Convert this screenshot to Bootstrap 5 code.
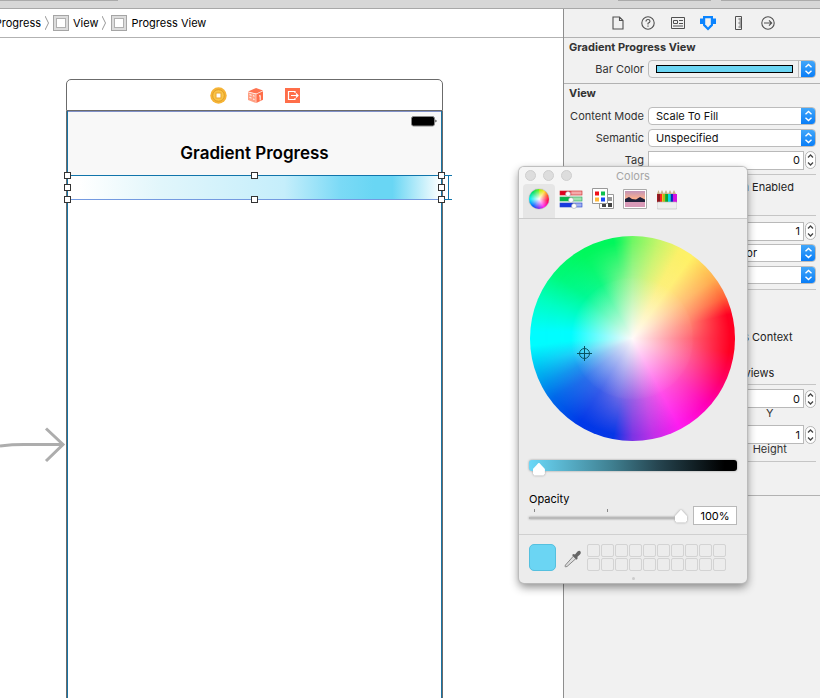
<!DOCTYPE html>
<html lang="en">
<head>
<meta charset="utf-8">
<meta name="viewport" content="width=device-width, initial-scale=1">
<title>Gradient Progress View</title>
<link href="https://cdn.jsdelivr.net/npm/bootstrap@5.3.0/dist/css/bootstrap.min.css" rel="stylesheet">
<style>
body{font:11px/14px Inter,"Liberation Sans",sans-serif;color:#222;background:#fff}
svg{display:block;flex:none}
.toolbar-strip{height:9px;background:#d7d7d7;border-bottom:1px solid #a8a8a8}
.strip-tab{height:1px;background:#aaa}
.tab-long{width:118px}.tab-mid{width:93px}.tab-end{width:99px;margin-left:10px}
.jumpbar{height:29px;border-bottom:1px solid #b2b2b2;color:#000}
.jump-first{width:41px;white-space:nowrap}
.view-glyph{width:16px;height:16px;border:1px solid #a5a5a5;background:#dcdcdc;padding:2px}
.view-glyph::after{content:"";display:block;height:10px;border:1px solid #b0b0b0;background:#fff}
.editor{min-width:0}
.canvas{padding-top:41px;overflow:hidden}
.entry-arrow{margin-top:346px}
.scene{width:377px}
.scene-dock{height:32px;border:1px solid #6b6b6b;border-radius:5px 5px 0 0;gap:20px;padding-left:2px}
.device{border:solid #6b6b6b;border-width:0 1px;}
.device-screen{border:solid #1873a3;border-width:0 1px}
.status-nav{height:64px;background:#f8f8f8;border-top:1px solid #8090c8}
.nav-title{font-size:17px;line-height:20px;font-weight:600;color:#000}
.bar-view{position:relative;height:25px;border-top:1px solid #1175ab;border-bottom:1px solid #749ae0;background:linear-gradient(90deg,#fff 3%,#e1f6fb 25%,#c5eefb 58%,#7bdaf6 73%,#69d6f4 82%,#69d6f4 87%,#fff 100%)}
.grip{position:absolute;width:7px;height:7px;border:1px solid #333;background:#fff;margin:-4px 0 0 -4px}
.g-l{left:0}.g-c{left:50%}.g-r{left:100%;margin-left:-3px}.g-t{top:0}.g-m{top:50%}.g-b{top:100%;margin-top:-3px}
.constraint{position:absolute;left:100%;top:-1px;margin-left:3px}
.inspector{width:257px;border-left:1px solid #8e8e8e;background:#f1f1f1}
.inspector-tabs{height:29px;border-bottom:1px solid #b2b2b2;gap:14px;padding-left:2px}
.bare{border:0;padding:0;background:none}
.sect{border-bottom:1px solid #b2b2b2;padding:2px 4px 0 5px}
.sect h2{font-size:11px;line-height:14px;font-weight:700;color:#333;margin:0}
.prop{display:grid;grid-template-columns:75px minmax(0,1fr);column-gap:4px;align-items:center;height:22px}
.prop>label,.prop>.cap{text-align:right;color:#333;white-space:nowrap}
.prop-color{margin:4px 0 3px}
.block-mode{padding:5px 0 3px}
.pop{height:18px;border:1px solid #bcbcbc;border-radius:4px;background:#fff;overflow:hidden}
.pop select{appearance:none;border:0;background:transparent;color:#111;padding:0 0 0 7px;min-width:0;line-height:16px;outline:0}
.pop select.with-chip{padding-left:47px}
.pop-cap{width:15px;margin:-1px -1px -1px 0;background:linear-gradient(#45a9fa,#067bf7)}
.well{background:#f1f1f1}
.well-swatch{height:8px;margin:4px 5px 0 7px;border:1px solid #000;background:#6bd5f3;padding:0}
.well-gap{width:3px;border-left:1px solid #bbb}
.num{width:1px;height:19px;min-width:0;border:1px solid #b9b9b9;border-radius:0;background:#fff;text-align:right;padding:0 3px;color:#111;outline:0}
.stepper{flex:none;width:11px;height:18px;border:1px solid #b5b5b5;border-radius:6px;background:#fff;padding:0;margin-left:1px}
.rule{border-top:1px solid #c5c5c5}
.tick{display:flex;align-items:center;gap:6px;height:18px;margin-left:79px}
.tick input{width:12px;height:12px;margin:0}
.block-ui{height:41px;padding-top:3px}
.block-draw{padding:4px 0 3px}
.block-checks{padding:2px 0}
.block-geo{padding:4px 0 0 79px;height:77px}
.geo{display:grid;grid-template-columns:minmax(0,1fr) minmax(0,1fr);column-gap:5px;row-gap:7px}
.geo small{display:block;font-size:11px;line-height:10px;text-align:center;padding-right:11px;color:#333}
.sect-end{height:34px}
.colors{position:absolute;left:519px;top:167px;width:228px;background:#ececec;border-radius:5px;box-shadow:0 0 1px 1px #bbb,0 4px 10px #0007}
.colors-head{background:#f5f5f5;border-bottom:1px solid #ccc;border-radius:5px 5px 0 0;height:52px}
.titlebar{display:grid;grid-template-columns:1fr auto 1fr;height:17px;align-items:center;color:#a5a5a5;padding:0 6px}
.titlebar h1{font-size:11px;line-height:14px;font-weight:400;margin:0}
.lights{gap:7px}
.light{width:11px;height:11px;border-radius:50%;background:#ddd;border:1px solid #cfcfcf;padding:0}
.mode{width:32px;height:34px;border-radius:4px 4px 0 0;display:grid;place-items:center;padding-bottom:4px}
.mode.on{background:#e6e6e6}
.wheel-thumb,.wheel{border-radius:50%;position:relative}
.wheel-thumb{width:20px;height:20px;background:radial-gradient(#fff,#fff0 65%),conic-gradient(#a0f000,#ffe030 35deg,#ff5030 70deg,#ff0050 100deg,#ff20f0 150deg,#7030f0 185deg,#0060ff 220deg,#00f0f0 270deg,#00e060 320deg,#60f020);box-shadow:0 0 1px #555}
.wheel{width:205px;height:205px;margin:17px 0 0 1px;overflow:hidden;background:conic-gradient(#6ff764,#c5f56a 15deg,#fbf168 28deg,#fff166 36deg,#ffad4f 54deg,#ff6038 66deg,#ff0022 76deg,#ff0022 98deg,#ff0066 115deg,#ff00b8 132deg,#ff1cf0 152deg,#c030e8 168deg,#7c34e4 180deg,#0637e6 191deg,#0038e8 212deg,#0068ea 233deg,#00b4f0 250deg,#00fdff 266deg,#00fdff 274deg,#00ffc0 293deg,#00fa78 310deg,#00f85c 330deg,#00f75c 349deg,#20f75f 353deg,#6ff764)}
.wheel::before,.wheel::after{content:"";position:absolute;inset:0;border-radius:50%}
.wheel::before{background:conic-gradient(#a6f492,#d8f37e 15deg,#fbf07a 27deg,#ffee7c 36deg,#ffc27c 54deg,#ff8070 76deg,#ff5f70 90deg,#ff5a98 110deg,#ff50c0 130deg,#ff52ea 152deg,#c85ce6 168deg,#9860e4 180deg,#6a68e6 194deg,#3a5ee8 212deg,#2a70ea 230deg,#2096ee 243deg,#20d0f8 256deg,#00fdff 268deg,#00fdff 276deg,#00fdc4 295deg,#00f996 312deg,#10f884 330deg,#50f688 342deg,#a6f492);-webkit-mask:radial-gradient(closest-side,#000 58%,#0000 95%);mask:radial-gradient(closest-side,#000 58%,#0000 95%)}
.wheel::after{background:radial-gradient(closest-side,#fffafa,#fffafa00 60%)}
.target{position:absolute;left:47px;top:110px;z-index:1}
.colors-body{padding:0 10px}
.range{appearance:none;background:transparent;display:block;margin:0;height:16px}
.range::-webkit-slider-runnable-track{height:12px}
.range::-webkit-slider-thumb{appearance:none;width:12px;height:13px;background:#fff;clip-path:polygon(50% 0,100% 50%,100% 85%,88% 100%,12% 100%,0 85%,0 50%)}
.bright{margin-top:16px;height:16px;filter:drop-shadow(0 0 1px #999)}
.bright::-webkit-slider-runnable-track{background:linear-gradient(90deg,#6bd8f8,#3f7f90 40%,#264550 62%,#000 94%);border-radius:3px;height:11px}
.bright::-webkit-slider-thumb{margin-top:3px}
.op-label{margin-top:19px;color:#000}
.op-slider{filter:drop-shadow(0 0 1px #999);height:14px;width:158px;margin-top:-3px}
.op-slider::-webkit-slider-runnable-track{height:13px;background:linear-gradient(#b9b9b9,#b9b9b9) 0 7px/100% 2px no-repeat}
.ticks{height:3px;margin-top:3px;padding:0 79px 0 5px}
.ticks i{width:1px;background:#888}
.pct{width:44px;height:19px;border:1px solid #b9b9b9;background:#fff;text-align:center;padding:0;color:#000}
.tray{border-top:1px solid #d0d0d0;margin-top:9px;padding:9px 10px 0;height:49px}
.current{width:27px;height:27px;border:1px solid #55c0df;border-radius:5px;background:#6bd5f3;padding:0}
.swatches{display:grid;grid-template-columns:repeat(10,13px);gap:1px;margin-left:5px}
.swatches i{height:13px;border:1px solid #d3d3d3;border-radius:2px}
.drag-dot{position:absolute;left:50%;bottom:3px;width:3px;height:3px;margin-left:-1px;border-radius:50%;background:#ccc}
</style>
<script src="https://cdn.jsdelivr.net/npm/bootstrap@5.3.0/dist/js/bootstrap.bundle.min.js"></script>
</head>
<body>
<svg width="0" height="0" class="position-absolute" aria-hidden="true">
<symbol id="updown" viewBox="0 0 15 18"><path d="M4.500 7.300 7.500 4.500l3 2.800M4.500 10.700l3 2.800 3-2.800" fill="none" stroke="#fff" stroke-width="1.400"/></symbol>
<symbol id="step" viewBox="0 0 9 16"><path d="M2 5.500 4.500 3 7 5.500M2 10.500 4.500 13 7 10.500" fill="none" stroke="#444" stroke-width="1.300"/></symbol>
</svg>
<div class="min-vh-100 d-flex flex-column overflow-hidden position-relative">
<header class="toolbar-strip d-flex"><span class="strip-tab tab-long me-auto"></span><span class="strip-tab tab-mid"></span><span class="strip-tab tab-end"></span></header>
<div class="d-flex flex-grow-1">
<main class="editor flex-grow-1 d-flex flex-column">
<nav class="jumpbar d-flex align-items-center" aria-label="Jump bar">
<span class="jump-first d-flex justify-content-end overflow-hidden">Gradient&nbsp;Progress</span>
<svg class="ms-1 me-1" width="4" height="14" viewBox="0 0 4 14"><path d="M0 0 3.500 7 0 14" fill="none" stroke="#999"/></svg>
<span class="view-glyph"></span><span class="ms-1">View</span>
<svg class="ms-1 me-1" width="5" height="14" viewBox="0 0 5 14"><path d="M0 0 3.500 7 0 14" fill="none" stroke="#999"/></svg>
<span class="view-glyph"></span><span class="ms-1">Progress View</span>
</nav>
<section class="canvas flex-grow-1 d-flex">
<svg class="entry-arrow" width="66" height="40" viewBox="0 0 66 40"><path d="M0 21 Q12 19.500 24 19.500H63M46 3.500 63 19.500 46 36" fill="none" stroke="#adadad" stroke-width="3"/></svg>
<div class="scene d-flex flex-column flex-shrink-0">
<div class="scene-dock d-flex justify-content-center align-items-center">
<svg width="17" height="17" viewBox="0 0 17 17"><circle cx="8.500" cy="8.500" r="8.200" fill="#f6b436"/><circle cx="8.500" cy="8.500" r="5.800" fill="#fbc648" stroke="#e09f2a"/><rect x="6" y="6" width="5" height="5" fill="#fff" stroke="#e8a52e"/></svg>
<svg width="17" height="17" viewBox="0 0 17 17"><path d="M1 4.500 9 1l7 2.500-6.500 3z" fill="#ff7350"/><path d="M1 5.200 8.800 7.200V16L1 13z" fill="#ffa084"/><path d="M9.300 7.200 16 4.300v8.500L9.300 16z" fill="#ff6e49"/><path d="M2.500 7.700l2 .5M2.500 10.500l2 .5M6 8.700l1.500.4M6 12l1.500.4M12 9.200l1.200-.8v5" fill="none" stroke="#fff"/></svg>
<svg width="17" height="17" viewBox="0 0 17 17"><rect x="1" y="1" width="15" height="15" fill="#ff6e49"/><path d="M11 6V4.500H4.500v8H11V11M7 8.500h7M12 6.500l2 2-2 2" fill="none" stroke="#fff" stroke-width="1.200"/></svg>
</div>
<div class="device flex-grow-1 d-flex">
<div class="device-screen flex-grow-1">
<div class="status-nav d-flex flex-column">
<svg class="ms-auto me-1 mt-1" width="26" height="11" viewBox="0 0 26 11"><rect x=".5" y=".5" width="23" height="9.500" rx="2" fill="#000" stroke="#888"/><path d="M24.500 3.500q2 1.500 0 3z"/></svg>
<div class="nav-title text-center mt-3">Gradient Progress</div>
</div>
<div class="bar-view">
<i class="grip g-l g-t"></i><i class="grip g-l g-m"></i><i class="grip g-l g-b"></i><i class="grip g-c g-t"></i><i class="grip g-c g-b"></i><i class="grip g-r g-t"></i><i class="grip g-r g-m"></i><i class="grip g-r g-b"></i>
<svg class="constraint" width="8" height="25" viewBox="0 0 8 25"><path d="M0 .5h8M0 24.500h8M4.500 0v25" stroke="#1175ab"/></svg>
</div>
</div></div></div>
</section>
</main>
<aside class="inspector flex-shrink-0">
<div class="inspector-tabs d-flex justify-content-center align-items-center">
<button class="bare" aria-label="File"><svg width="16" height="16" viewBox="0 0 16 16" fill="none" stroke="#505050" stroke-width="1.100"><path d="M3 2h6.500L13 5.500V14H3zM9.500 2v3.500H13"/></svg></button>
<button class="bare" aria-label="Quick help"><svg width="16" height="16" viewBox="0 0 16 16" fill="none" stroke="#505050" stroke-width="1.100"><circle cx="8" cy="8" r="6.200"/><path d="M6 6.500Q6 4.500 8 4.500t2 1.800Q10 7.500 8 8.300V9.500M8 10.500v1.300"/></svg></button>
<button class="bare" aria-label="Identity"><svg width="16" height="16" viewBox="0 0 16 16" fill="none" stroke="#505050"><path d="M1.500 2.500h13v11h-13zM3.500 5.500h4v3h-4zM9 5.500h4M9 8.500h4M3 11h10"/></svg></button>
<button class="bare" aria-label="Attributes"><svg width="16" height="16" viewBox="0 0 16 16"><path d="M3 1h10v2.500h3V9h-3v1.500L8 15.500l-5-5V9H0V3.500h3z" fill="#0a84ff"/><path d="M5.200 3.200h5.600v6L8 12.500 5.200 9.200z" fill="#f1f1f1"/></svg></button>
<button class="bare" aria-label="Size"><svg width="16" height="16" viewBox="0 0 16 16" fill="none" stroke="#505050"><path d="M5.500 1.500v13h6v-13zM8.500 4h3M9.500 6h2M8.500 8h3M9.500 10h2M8.500 12h3"/></svg></button>
<button class="bare" aria-label="Connections"><svg width="16" height="16" viewBox="0 0 16 16" fill="none" stroke="#505050" stroke-width="1.100"><circle cx="8" cy="8" r="6.200"/><path d="M4 8h7.500M9 5.300 11.700 8 9 10.700"/></svg></button>
</div>
<section class="sect"><h2>Gradient Progress View</h2>
<div class="prop prop-color"><span class="cap">Bar Color</span><div class="pop well d-flex"><button class="well-swatch flex-grow-1" aria-label="Bar color"></button><span class="well-gap"></span><button class="bare pop-cap" aria-label="Choose bar color"><svg width="15" height="18"><use href="#updown"/></svg></button></div></div>
</section>
<section class="sect"><h2>View</h2>
<div class="block-mode">
<div class="prop"><label for="mode">Content Mode</label><div class="pop d-flex"><select id="mode" class="flex-grow-1"><option>Scale To Fill</option></select><span class="pop-cap"><svg width="15" height="18"><use href="#updown"/></svg></span></div></div>
<div class="prop"><label for="sem">Semantic</label><div class="pop d-flex"><select id="sem" class="flex-grow-1"><option>Unspecified</option></select><span class="pop-cap"><svg width="15" height="18"><use href="#updown"/></svg></span></div></div>
<div class="prop"><label for="tag">Tag</label><div class="d-flex align-items-center"><input id="tag" class="num flex-grow-1" value="0"><button class="stepper" aria-label="Step tag"><svg width="9" height="16"><use href="#step"/></svg></button></div></div>
</div>
<div class="rule block-ui"><div class="tick"><input type="checkbox" id="ui" checked><label for="ui">User Interaction Enabled</label></div></div>
<div class="rule block-draw">
<div class="prop"><label for="alpha">Alpha</label><div class="d-flex align-items-center"><input id="alpha" class="num flex-grow-1" value="1"><button class="stepper" aria-label="Step alpha"><svg width="9" height="16"><use href="#step"/></svg></button></div></div>
<div class="prop"><label for="bg">Background</label><div class="pop d-flex"><select id="bg" class="with-chip flex-grow-1"><option>White Color</option></select><span class="pop-cap"><svg width="15" height="18"><use href="#updown"/></svg></span></div></div>
<div class="prop"><label for="tint">Tint</label><div class="pop d-flex"><select id="tint" class="flex-grow-1"><option>Default</option></select><span class="pop-cap"><svg width="15" height="18"><use href="#updown"/></svg></span></div></div>
</div>
<div class="rule block-checks">
<div class="tick"><input type="checkbox" id="c1"><label for="c1">Opaque</label></div>
<div class="tick"><input type="checkbox" id="c2"><label for="c2">Hidden</label></div>
<div class="tick"><input type="checkbox" id="c3" checked><label for="c3">Clears Graphics Context</label></div>
<div class="tick"><input type="checkbox" id="c4"><label for="c4">Clip Subviews</label></div>
<div class="tick"><input type="checkbox" id="c5" checked><label for="c5">Autoresize Subviews</label></div>
</div>
<div class="rule block-geo"><div class="geo">
<div><div class="d-flex align-items-center"><input class="num flex-grow-1" aria-label="X" value="0"><button class="stepper" aria-label="Step X"><svg width="9" height="16"><use href="#step"/></svg></button></div><small>X</small></div>
<div><div class="d-flex align-items-center"><input class="num flex-grow-1" aria-label="Y" value="0"><button class="stepper" aria-label="Step Y"><svg width="9" height="16"><use href="#step"/></svg></button></div><small>Y</small></div>
<div><div class="d-flex align-items-center"><input class="num flex-grow-1" aria-label="Width" value="1"><button class="stepper" aria-label="Step width"><svg width="9" height="16"><use href="#step"/></svg></button></div><small>Width</small></div>
<div><div class="d-flex align-items-center"><input class="num flex-grow-1" aria-label="Height" value="1"><button class="stepper" aria-label="Step height"><svg width="9" height="16"><use href="#step"/></svg></button></div><small>Height</small></div>
</div></div>
<div class="rule sect-end"></div>
</section>
</aside>
</div>
<section class="colors" aria-label="Colors">
<div class="colors-head">
<div class="titlebar"><div class="lights d-flex"><button class="light" aria-label="Close"></button><button class="light" aria-label="Minimize"></button><button class="light" aria-label="Zoom"></button></div><h1>Colors</h1><span></span></div>
<div class="d-flex ps-1">
<button class="bare mode on" aria-label="Color wheel"><span class="wheel-thumb"></span></button>
<button class="bare mode" aria-label="Sliders"><svg width="24" height="22" viewBox="0 0 24 22"><defs><linearGradient id="r"><stop stop-color="#e00020"/><stop offset=".4" stop-color="#e00020"/><stop offset=".55" stop-color="#f4aaaa"/></linearGradient><linearGradient id="g"><stop stop-color="#08b548"/><stop offset=".5" stop-color="#08b548"/><stop offset=".6" stop-color="#a0e0b0"/></linearGradient><linearGradient id="b"><stop stop-color="#1838e0"/><stop offset=".6" stop-color="#1838e0"/><stop offset=".75" stop-color="#a0b0f0"/></linearGradient></defs><g stroke-width=".6"><rect x="1" y="3" width="22" height="4" fill="url(#r)" stroke="#c22"/><rect x="1" y="9" width="22" height="4" fill="url(#g)" stroke="#2a5"/><rect x="1" y="15" width="22" height="4" fill="url(#b)" stroke="#24c"/></g><g fill="#fff" stroke="#999" stroke-width=".5"><circle cx="9" cy="6" r="2.500"/><circle cx="12" cy="12" r="2.500"/><circle cx="15" cy="18" r="2.500"/></g></svg></button>
<button class="bare mode" aria-label="Palettes"><svg width="24" height="22" viewBox="0 0 24 22"><path d="M8.500 6.500h14v14h-14z" fill="#fff" stroke="#999"/><path d="M17 9h4v4h-4z" fill="#999"/><path d="M11 15h4v4h-4zM17 15h4v4h-4z" fill="#444"/><path d="M1.500.5h15v15h-15z" fill="#fff" stroke="#999"/><path d="M4 3.500h4v4H4z" fill="#f01018"/><path d="M10 3.500h4v4h-4z" fill="#10c050"/><path d="M4 9.500h4v4H4z" fill="#ffb838"/><path d="M10 9.500h4v4h-4z" fill="#1848f8"/></svg></button>
<button class="bare mode" aria-label="Image"><svg width="24" height="20" viewBox="0 0 24 20"><defs><linearGradient id="sky" x2="0" y2="1"><stop stop-color="#c294b8"/><stop offset=".5" stop-color="#ffb08a"/></linearGradient></defs><path d="M.5.500h23v19H.5z" fill="#fff" stroke="#aaa"/><path d="M2 2h20v16H2z" fill="url(#sky)"/><path d="M2 12h20v6H2z" fill="#d99ab8"/><path d="M2 10l4-2 3 2 4 .500 4-2.500 5 2.500v2.500H2z" fill="#20203a"/></svg></button>
<button class="bare mode" aria-label="Pencils"><svg width="20" height="21" viewBox="0 0 20 21"><path d="M0 5 1.500 1 3 5 5 1l2 4 2-4 2 4 2-4 2 4 2-4 2 4z" fill="#c9b28a"/><g><path d="M0 5h3v9H0z" fill="#a01820"/><path d="M3 5h2v9H3z" fill="#ff2020"/><path d="M5 5h3v9H5z" fill="#e0d020"/><path d="M8 5h3v9H8z" fill="#10c030"/><path d="M11 5h3v9h-3z" fill="#00d8e8"/><path d="M14 5h2v9h-2z" fill="#1028d0"/><path d="M16 5h4v9h-4z" fill="#d010e0"/></g><path d="M2 5v8M7 5v8M10 5v8M14 5v8" stroke="#2228" stroke-width=".7"/><rect y="13" width="20" height="7" rx="1" fill="#eee" stroke="#bbb" stroke-width=".6"/></svg></button>
</div></div>
<div class="colors-body">
<div class="wheel"><svg class="target" width="15" height="15" viewBox="0 0 15 15" fill="none" stroke="#075360"><circle cx="7.500" cy="7.500" r="5"/><path d="M0 7.500h15M7.500 0v15"/></svg></div>
<input type="range" class="range bright w-100" aria-label="Brightness" min="0" max="100" value="2">
<label for="op" class="op-label d-block">Opacity</label>
<div class="d-flex justify-content-between">
<div><div class="ticks d-flex justify-content-between"><i></i><i></i></div><input id="op" type="range" class="range op-slider" value="100"></div>
<input class="pct" value="100%" aria-label="Opacity percent"></div>
</div>
<div class="tray d-flex align-items-start">
<button class="current" aria-label="Current color"></button>
<svg class="ms-2 mt-1" width="18" height="20" viewBox="0 0 18 20"><path d="M3 18.500q-3 1-1.500-1.500l8-9 2.500 2.500z" fill="#ddd" stroke="#888"/><path d="M8 7l1.500-1 1.500.5 2.500-3q2-1.500 3 0t-.5 3l-2.500 2.300v2l-1 1z" fill="#666"/></svg>
<div class="swatches"><i></i><i></i><i></i><i></i><i></i><i></i><i></i><i></i><i></i><i></i><i></i><i></i><i></i><i></i><i></i><i></i><i></i><i></i><i></i><i></i></div>
</div>
<span class="drag-dot"></span>
</section>
</div>
</body>
</html>
